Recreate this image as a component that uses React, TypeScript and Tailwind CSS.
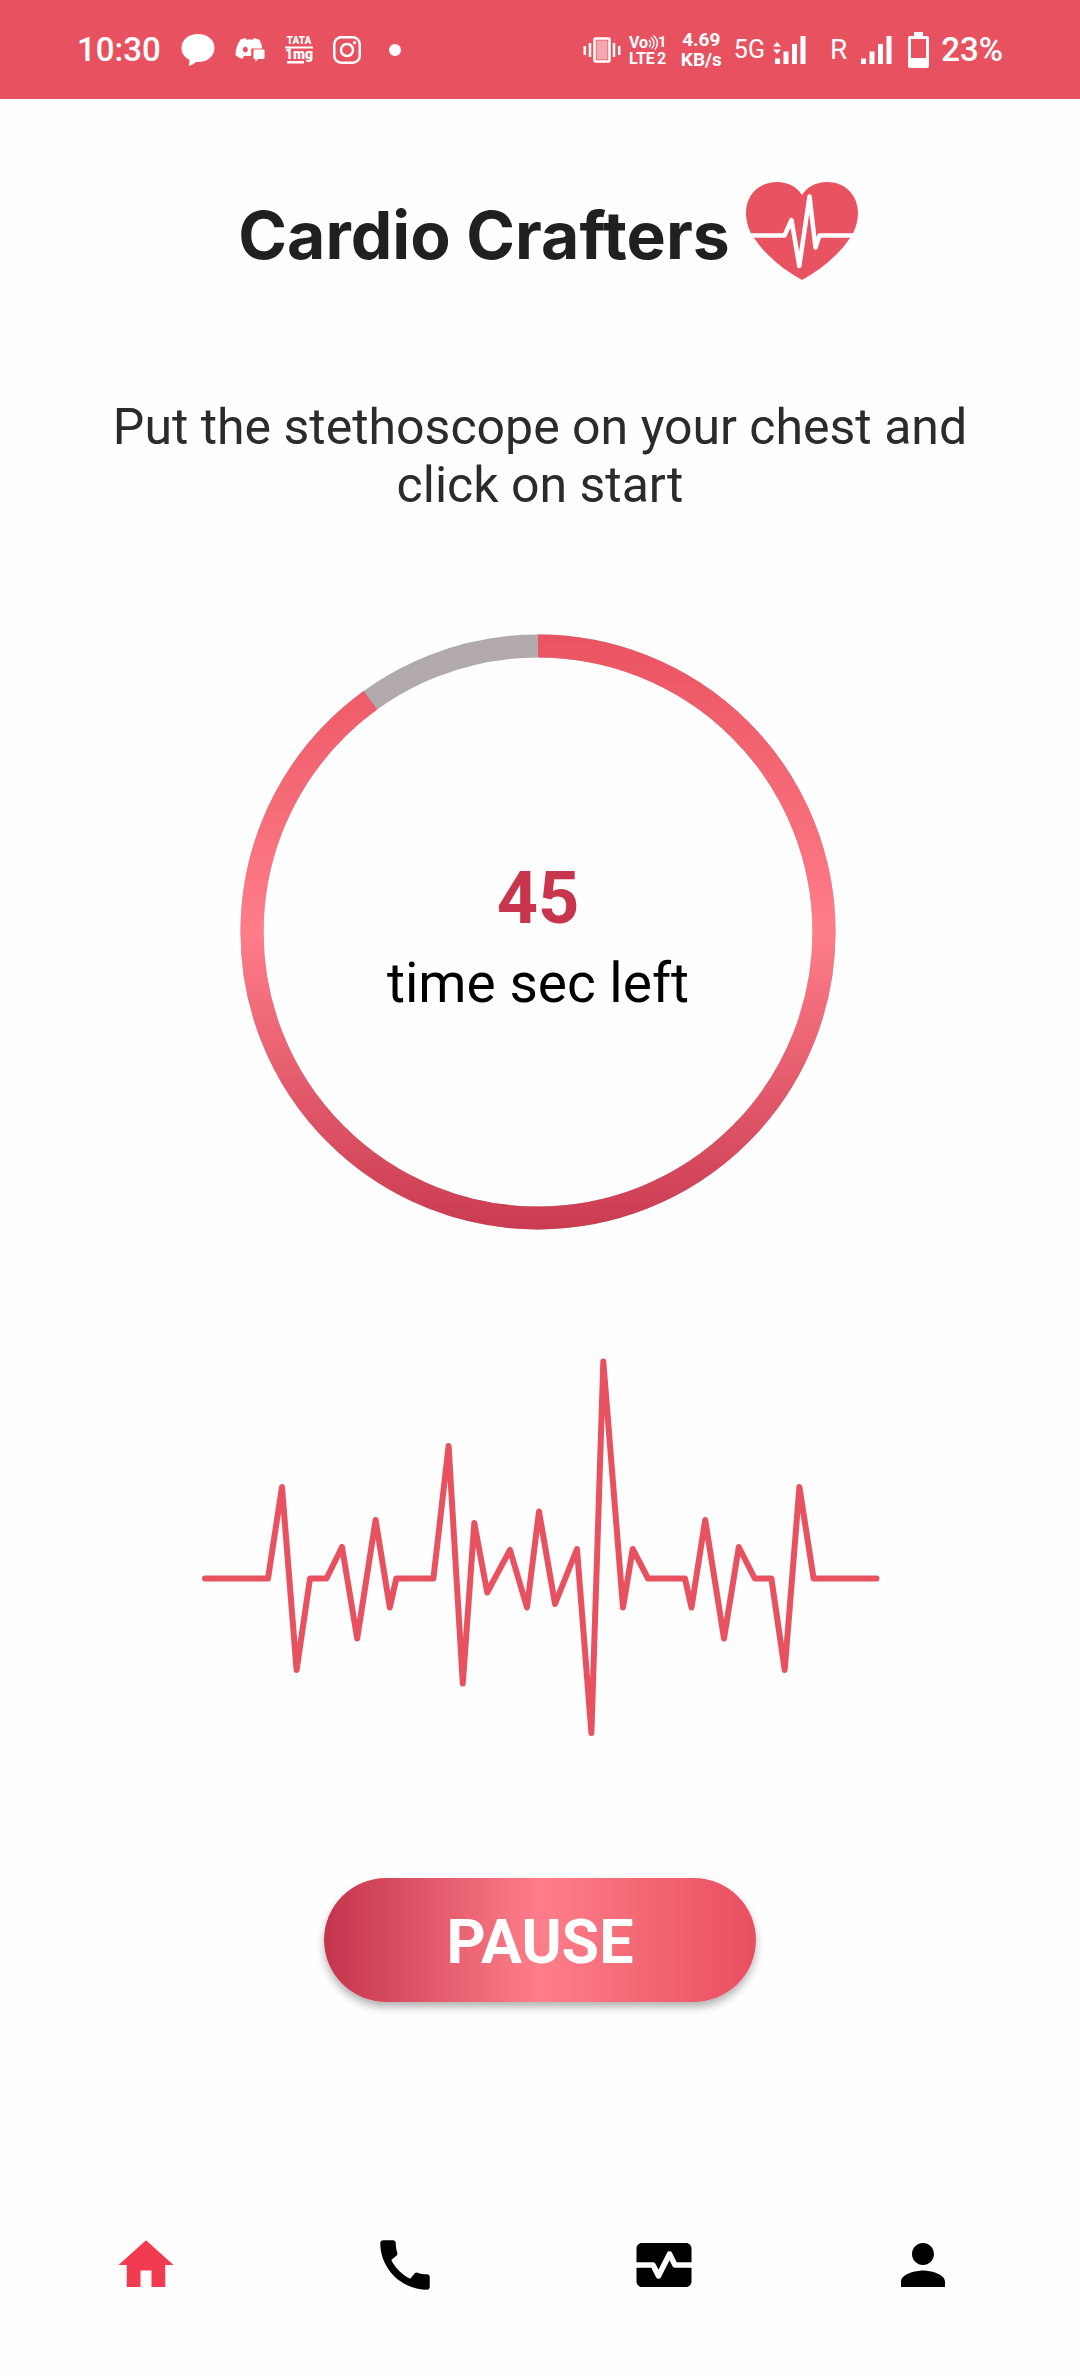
import React from "react";

const RING_RADIUS = 286;
const RING_LENGTH = 2 * Math.PI * RING_RADIUS;
const TOTAL_SECONDS = 50;

function ChatIcon() {
  return (
    <svg width="34" height="32" viewBox="0 0 34 32" fill="currentColor" aria-hidden="true">
      <path d="M17 0C7.500 0 .5 6 .5 14c0 5 3 9.500 7.800 11.800.5 2-.2 4.200-.8 6 3-.6 5.600-2 7.500-3.900h2c9.500 0 16.500-6 16.500-14S26.500 0 17 0z" />
    </svg>
  );
}

function DiscordIcon() {
  return (
    <svg width="30" height="26" viewBox="0 0 30 26" fill="currentColor" aria-hidden="true">
      <path
        fillRule="evenodd"
        d="M10.500 1 5.500 2.500C2.500 7 .5 12 .5 18c2 2 4.500 3.200 7 3.700l1.700-2.700h7v-7.500h11C27 8 26 5 24 2.500L19 1l-1 1.800c-2-.3-4.500-.3-6.500 0zM10.300 9.800a2.500 2.800 0 1 0 .01 0z"
      />
      <path d="M19.500 12.500h9a1 1 0 0 1 1 1V21a1 1 0 0 1-1 1H23l-2.500 3V22h-2v-8.500a1 1 0 0 1 1-1z" />
    </svg>
  );
}

function TataIcon() {
  return (
    <svg width="28" height="44" viewBox="1 -8 28 44" fill="currentColor" role="img" aria-label="TATA 1mg">
      <text x="15" y="8" textAnchor="middle" fontSize="10" fontWeight="900" fontFamily="Roboto, sans-serif">TATA</text>
      <path d="M1 10.500h28v2H1zM3 25h17v2.500H3z" />
      <text x="15" y="23" textAnchor="middle" fontSize="14" fontWeight="900" fontFamily="Roboto, sans-serif">1mg</text>
    </svg>
  );
}

function InstagramIcon() {
  return (
    <svg width="28" height="28" viewBox="0 0 28 28" fill="none" stroke="currentColor" strokeWidth="2.500" aria-hidden="true">
      <rect x="1.250" y="1.250" width="25.500" height="25.500" rx="7" />
      <circle cx="14" cy="14" r="6" />
      <circle cx="21.500" cy="6.700" r="1.600" fill="currentColor" stroke="none" />
    </svg>
  );
}

function VibrateIcon() {
  return (
    <svg width="38" height="26" viewBox="0 0 38 26" fill="none" stroke="currentColor" strokeWidth="2.500" aria-hidden="true">
      <rect x="11.500" y="1.500" width="15" height="23" rx="1" />
      <rect x="13.500" y="3.500" width="11" height="19" fill="currentColor" fillOpacity="0.500" stroke="none" />
      <path d="M1.800 9v9M7 6v14M31 6v14M36.200 9v9" />
    </svg>
  );
}

function VolteIcon() {
  return (
    <svg width="40" height="46" viewBox="0 -8 40 46" fill="currentColor" role="img" aria-label="VoLTE 1 2">
      <g fontFamily="Roboto, sans-serif" fontWeight="700">
        <text x="0" y="13" fontSize="16">Vo</text>
        <text x="29" y="12" fontSize="15">1</text>
        <text x="0" y="29" fontSize="16">LTE</text>
        <text x="28" y="29" fontSize="16">2</text>
      </g>
      <path d="M20 5c2 2 2 5 0 7M22 2.500c4 3 4 8 .5 11M24 .5c6 4 5 10 2 14" fill="none" stroke="currentColor" strokeWidth="1.500" />
    </svg>
  );
}

function SignalIcon({ data = false }: { data?: boolean }) {
  return (
    <svg width="33" height="28" viewBox="0 0 33 28" fill="currentColor" aria-hidden="true">
      <path d="M2 22.500h5V28H2zM10.500 15.500h5V28h-5zM19 8h5v20h-5zM27.500 0h5v28h-5z" />
      {data && <path d="M0 10.500 4 6l4 4.500zM0 13.500h8L4 18z" />}
    </svg>
  );
}

function BatteryIcon() {
  return (
    <svg width="21" height="36" viewBox="0 0 21 36" fill="currentColor" aria-hidden="true">
      <path fillRule="evenodd" d="M6 0h9v4h4a2 2 0 0 1 2 2v28a2 2 0 0 1-2 2H2a2 2 0 0 1-2-2V6a2 2 0 0 1 2-2h4zM3 7v19h15V7z" />
    </svg>
  );
}

function StatusBar() {
  return (
    <div className="flex h-[99px] items-center justify-between bg-[#e85260] px-[77px] text-white">
      <div className="flex items-center gap-5">
        <span className="text-[33px] font-medium leading-10">10:30</span>
        <ChatIcon />
        <DiscordIcon />
        <TataIcon />
        <InstagramIcon />
        <span className="ml-2 size-3 rounded-full bg-white" />
      </div>
      <div className="flex items-center">
        <VibrateIcon />
        <span className="ml-2 flex"><VolteIcon /></span>
        <span className="ml-3 text-center text-[19px] font-bold leading-5">
          4.69
          <br />
          KB/s
        </span>
        <span className="ml-3 text-[25px] leading-10">5G</span>
        <span className="ml-2 flex"><SignalIcon data /></span>
        <span className="ml-6 text-[28px] leading-10">R</span>
        <span className="ml-3 flex"><SignalIcon /></span>
        <span className="ml-4 flex"><BatteryIcon /></span>
        <span className="ml-3 text-[33px] font-medium leading-10">23%</span>
      </div>
    </div>
  );
}

function HeartLogo() {
  return (
    <svg width="112" height="98" viewBox="0 0 112 98" aria-hidden="true">
      <path
        d="M56 13C51 5 42 0 31 0 13 0 0 13 0 31c0 9 3 18 8 25 12 18 30 32 48 42 18-10 36-24 48-42 5-7 8-16 8-25C112 13 99 0 81 0 70 0 61 5 56 13z"
        fill="#e95260"
      />
      <path
        d="M2 53.500h36.500l7-15.500 7.800 46L63.500 14.500l6 51 4-12H110"
        fill="none"
        stroke="#fff"
        strokeWidth="4.500"
        strokeLinecap="round"
        strokeLinejoin="round"
      />
    </svg>
  );
}

function TimerRing({ seconds }: { seconds: number }) {
  const filled = RING_LENGTH * (seconds / TOTAL_SECONDS);
  return (
    <div className="grid size-[596px] place-items-center">
      <svg viewBox="0 0 596 596" className="col-start-1 row-start-1 size-full" aria-hidden="true">
        <defs>
          <linearGradient id="ring" gradientUnits="userSpaceOnUse" x1="0" y1="0" x2="0" y2="596">
            <stop offset="0" stopColor="#ea5362" />
            <stop offset="0.500" stopColor="#ff7d89" />
            <stop offset="1" stopColor="#ca3b51" />
          </linearGradient>
        </defs>
        <circle cx="298" cy="298" r={RING_RADIUS} fill="none" stroke="#b2a9aa" strokeWidth="23" />
        <path
          d="M298 12a286 286 0 0 1 0 572a286 286 0 0 1 0-572"
          fill="none"
          stroke="url(#ring)"
          strokeWidth="23"
          strokeDasharray={`${filled} ${RING_LENGTH}`}
        />
      </svg>
      <div className="col-start-1 row-start-1 pt-[18px] text-center">
        <div className="text-[72px] font-bold leading-[84px] text-[#c8354d]">{seconds}</div>
        <div className="text-[55px] leading-[84px] text-black">time sec left</div>
      </div>
    </div>
  );
}

function PulseTrace() {
  return (
    <svg width="720" height="430" viewBox="0 0 720 430" role="img" aria-label="Heartbeat trace">
      <polyline
        points="25,248.500 88,248.500 102,157 116.600,340 130,248.500 146.500,248.500 162,217 177.200,308.500 195.600,190 209.800,277.500 216.300,248.500 253.400,248.500 268.600,116 282.800,353.500 294.300,193 307.200,262.500 330,220 347,277.500 359,181.500 375,274 397,219 411.400,403 423.300,31.500 443,277.500 452.700,219 468,248.500 505,248.500 511.500,277.500 525.200,190 544,308.500 558.800,217 574.800,248.500 591.400,248.500 604.700,340 619.400,157 633.600,248.500 696.500,248.500"
        fill="none"
        stroke="#e85260"
        strokeWidth="6"
        strokeLinecap="round"
        strokeLinejoin="round"
      />
    </svg>
  );
}

const tabs = [
  { label: "Home", active: true, paths: ["M10 20v-6h4v6h5v-8h3L12 3 2 12h3v8z"] },
  {
    label: "Call",
    active: false,
    paths: [
      "M20.010 15.380c-1.230 0-2.420-.200-3.530-.560-.350-.120-.740-.030-1.010.240l-1.570 1.970c-2.830-1.350-5.480-3.900-6.890-6.830l1.950-1.660c.270-.280.350-.670.240-1.020-.370-1.110-.560-2.300-.560-3.530 0-.540-.450-.990-.990-.990H4.190C3.650 3 3 3.240 3 3.990 3 13.280 10.730 21 20.010 21c.710 0 .990-.630.990-1.180v-3.450c0-.540-.450-.990-.990-.990z",
    ],
  },
  {
    label: "Monitor",
    active: false,
    paths: [
      "M15.110 12.450 14 10.240l-3.110 6.210c-.160.340-.510.550-.890.550s-.730-.210-.890-.550L7.380 13H2v5c0 1.100.9 2 2 2h16c1.100 0 2-.9 2-2v-5h-6c-.380 0-.730-.210-.890-.550z",
      "M20 4H4c-1.100 0-2 .9-2 2v5h6c.380 0 .730.210.890.550L10 13.760l3.110-6.210c.340-.680 1.450-.680 1.790 0L16.620 11H22V6c0-1.100-.9-2-2-2z",
    ],
  },
  {
    label: "Profile",
    active: false,
    paths: ["M12 12c2.210 0 4-1.790 4-4s-1.790-4-4-4-4 1.790-4 4 1.790 4 4 4zm0 2c-2.670 0-8 1.340-8 4v2h16v-2c0-2.660-5.330-4-8-4z"],
  },
];

function BottomNav() {
  return (
    <nav className="mt-auto grid grid-cols-4 pb-[78px] pl-4 pr-7">
      {tabs.map((tab) => (
        <button
          key={tab.label}
          type="button"
          aria-label={tab.label}
          className={tab.active ? "flex justify-center text-[#f23b50]" : "flex justify-center text-black"}
        >
          <svg width="66" height="66" viewBox="0 0 24 24" fill="currentColor" aria-hidden="true">
            {tab.paths.map((d) => (
              <path key={d} d={d} />
            ))}
          </svg>
        </button>
      ))}
    </nav>
  );
}

export default function App() {
  return (
    <div className="flex min-h-screen flex-col bg-[#fefefe] font-[Roboto,sans-serif]">
      <StatusBar />
      <main className="flex flex-col items-center">
        <header className="mt-[83px] flex items-center gap-4 pl-4">
          <h1 className="pt-2 font-[Inter,sans-serif] text-[66px] font-bold leading-[80px] text-[#1e2120]">
            Cardio Crafters
          </h1>
          <HeartLogo />
        </header>
        <p className="mt-[118px] max-w-[900px] text-center text-[50px] leading-[58px] text-[#2b2b2b]">
          Put the stethoscope on your chest and click on start
        </p>
        <div className="mt-[120px] pr-1">
          <TimerRing seconds={45} />
        </div>
        <div className="mt-[100px]">
          <PulseTrace />
        </div>
        <button
          type="button"
          className="mt-[118px] h-[124px] w-[432px] rounded-full bg-[linear-gradient(90deg,#c4344c,#ff7e8a_50%,#e84f5f)] pt-1 text-[61px] font-bold leading-[72px] text-white shadow-[0_5px_8px_rgba(0,0,0,0.3)]"
        >
          PAUSE
        </button>
      </main>
      <BottomNav />
    </div>
  );
}
